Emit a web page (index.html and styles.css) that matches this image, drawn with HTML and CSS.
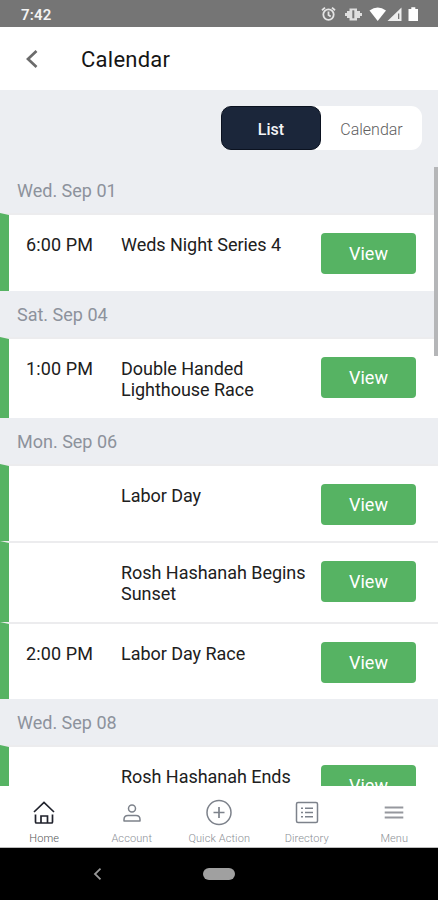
FILE: index.html
```html
<!DOCTYPE html>
<html lang="en">
<head>
<meta charset="utf-8">
<title>Calendar</title>
<link rel="stylesheet" href="styles.css">
</head>
<body>
<div class="status"><span class="clock">7:42</span>
<svg class="status-icons" width="100" height="20" viewBox="0 0 100 20">
<g fill="none" stroke="#e4e4e4" stroke-width="1.8"><circle cx="9.500" cy="10.600" r="5.200"/><path d="M9.500 7.500v3.400l2.200 1.500M3 6.200l3-2.600M16 6.200l-3-2.600"/></g>
<g fill="#dedede"><path d="M30.500 4.500h7.500v12h-7.500z"/><path d="M28 7h13v7H28zM26 9h17v3H26z"/></g>
<path d="M33.300 6.300h2v8h-2z" fill="#777"/>
<path d="M50.500 6.600Q58.700 0.500 67 6.600L58.700 17z" fill="#fff"/>
<path d="M82.500 3.500V17H68.500z" fill="#eee"/><path d="M79 9.500h1.300V15H79z" fill="#777"/>
<path d="M89.500 5h2.800V3.300h4V5h2.700v12h-9.500z" fill="#fff"/>
</svg></div>
<header class="header">
<svg width="14" height="20" viewBox="0 0 14 20"><path d="M11.500 2L3 10l8.500 8" fill="none" stroke="#6b6b6b" stroke-width="2.700"/></svg>
<h1>Calendar</h1>
</header>
<main class="content">
<div class="toolbar"><div class="toggle"><span class="tab active">List</span><span class="tab">Calendar</span></div></div>
<h2 class="date">Wed. Sep 01</h2>
<div class="event"><span class="time">6:00 PM</span><span class="name">Weds Night Series 4</span><span class="view">View</span></div>
<h2 class="date">Sat. Sep 04</h2>
<div class="event tall"><span class="time">1:00 PM</span><span class="name">Double Handed<br>Lighthouse Race</span><span class="view">View</span></div>
<h2 class="date">Mon. Sep 06</h2>
<div class="event short"><span class="time"></span><span class="name">Labor Day</span><span class="view">View</span></div>
<div class="event tall"><span class="time"></span><span class="name">Rosh Hashanah Begins<br>Sunset</span><span class="view">View</span></div>
<div class="event short"><span class="time">2:00 PM</span><span class="name">Labor Day Race</span><span class="view">View</span></div>
<h2 class="date">Wed. Sep 08</h2>
<div class="event"><span class="time"></span><span class="name">Rosh Hashanah Ends</span><span class="view">View</span></div>
<div class="scrollbar"></div>
</main>
<nav class="nav">
<div class="item current"><svg width="28" height="28" viewBox="0 0 28 28"><path d="M4 13L14 3.500 24 13M5.500 15.500v7.500q0 1 1 1h15q1 0 1-1v-7.500M11 24v-7h6.500v7" fill="none" stroke="#20222c" stroke-width="1.700"/></svg><span>Home</span></div>
<div class="item"><svg width="28" height="28" viewBox="0 0 28 28"><g fill="none" stroke="#7d828b" stroke-width="1.500"><circle cx="14" cy="9.500" r="3.500"/><path d="M6 22v-1.500q0-4 4-4h8q4 0 4 4V22z" stroke-linejoin="round"/></g></svg><span>Account</span></div>
<div class="item"><svg width="28" height="28" viewBox="0 0 28 28"><g fill="none" stroke="#7d828b" stroke-width="1.500"><circle cx="14" cy="13.500" r="12"/><path d="M14 8v11M8.500 13.500h11" stroke-width="1.700"/></g></svg><span>Quick Action</span></div>
<div class="item"><svg width="28" height="28" viewBox="0 0 28 28"><g fill="none" stroke="#7d828b" stroke-width="1.500"><rect x="3.500" y="3.500" width="21" height="20" rx="1.500"/><path d="M12 9.200h8M12 13.500h8M12 17.800h8M8 9.200h2M8 13.500h2M8 17.800h2"/></g></svg><span>Directory</span></div>
<div class="item"><svg width="28" height="28" viewBox="0 0 28 28"><path d="M4.700 8.500h18.600M4.700 13.500h18.600M4.700 18.500h18.600" stroke="#96989e" stroke-width="2.200"/></svg><span>Menu</span></div>
</nav>
<footer class="system">
<svg width="9" height="14" viewBox="0 0 9 14"><path d="M7.500 1.700L2 7l5.500 5.300" fill="none" stroke="#999" stroke-width="1.800"/></svg>
<div class="pill"></div>
<div></div>
</footer>
</body>
</html>
```
FILE: styles.css
```css
* { box-sizing: border-box; }
body {
  margin: 0;
  width: 438px;
  height: 900px;
  overflow: hidden;
  display: flex;
  flex-direction: column;
  background: #fff;
  font-family: Roboto, sans-serif;
  color: #202020;
}
.status {
  height: 27px;
  flex: none;
  display: flex;
  justify-content: space-between;
  align-items: center;
  padding: 0 15px 0 21px;
  background: #757575;
}
.clock { color: #f4f4f4; font-size: 15px; font-weight: 600; letter-spacing: 0.2px; padding-top: 2px; }
.status-icons { display: block; margin-top: 1px; margin-right: 4px; }
.header {
  height: 63px;
  flex: none;
  display: flex;
  align-items: center;
  padding: 2px 0 0 25px;
}
.header svg { margin-top: -2px; }
.header h1 {
  margin: 0 0 0 42px;
  font-size: 22px;
  font-weight: 450;
  letter-spacing: 0.25px;
  color: #151515;
}
.content {
  position: relative;
  height: 696px;
  flex: none;
  overflow: hidden;
  background: #eceef2;
}
.toolbar { height: 77px; padding: 16px 16px 0 0; display: flex; justify-content: flex-end; }
.toggle { display: flex; width: 201px; height: 44px; border-radius: 11px; background: #fff; }
.tab {
  flex: 1;
  display: flex;
  align-items: center;
  justify-content: center;
  padding-top: 2px;
  font-size: 16px;
  font-weight: 350;
  color: #606060;
}
.tab.active {
  flex: none;
  width: 100px;
  background: #1b263a;
  border: 1px solid #0b1220;
  border-radius: 10px;
  color: #f4f4f6;
  font-weight: 500;
}
.date {
  height: 46px;
  margin: 0;
  padding: 2px 0 0 17px;
  line-height: 44px;
  font-size: 18px;
  font-weight: 370;
  letter-spacing: 0;
  color: #8d929c;
}
.event {
  display: flex;
  align-items: flex-start;
  height: 78px;
  padding: 18px 22px 0 17px;
  border-top: 2px solid #ececee;
  border-left: 9px solid #56b363;
  background: #fff;
  font-size: 18px;
  font-weight: 370;
  line-height: 21px;
}
.event.tall { height: 81px; }
.event.short { height: 77px; }
.time { width: 95px; padding-top: 1px; letter-spacing: 0.1px; }
.name { flex: 1; padding-top: 1px; white-space: nowrap; letter-spacing: -0.04px; }
.view {
  width: 95px;
  height: 41px;
  border-radius: 4px;
  background: #56b363;
  color: #fff;
  font-size: 18px;
  font-weight: 400;
  line-height: 42px;
  text-align: center;
}
.scrollbar {
  position: absolute;
  right: 0;
  top: 77px;
  width: 4px;
  height: 189px;
  background: #b5b6b8;
}
.nav {
  height: 62px;
  flex: none;
  display: grid;
  grid-template-columns: repeat(5, 87.5px);
  padding: 13px 0 0 0.5px;
  border-bottom: 1px solid #bbb;
  background: #fff;
}
.item {
  display: flex;
  flex-direction: column;
  align-items: center;
  gap: 6px;
  font-size: 11px;
  font-weight: 350;
  line-height: 12px;
  letter-spacing: 0.1px;
  color: #8c8f96;
  white-space: nowrap;
}
.current { color: #555; }
.system {
  height: 52px;
  flex: none;
  display: grid;
  grid-template-columns: 1fr 32px 1fr;
  align-items: center;
  background: #000;
}
.system svg { margin-left: 93px; }
.pill { width: 32px; height: 12px; border-radius: 6px; background: #a0a0a0; }
```
